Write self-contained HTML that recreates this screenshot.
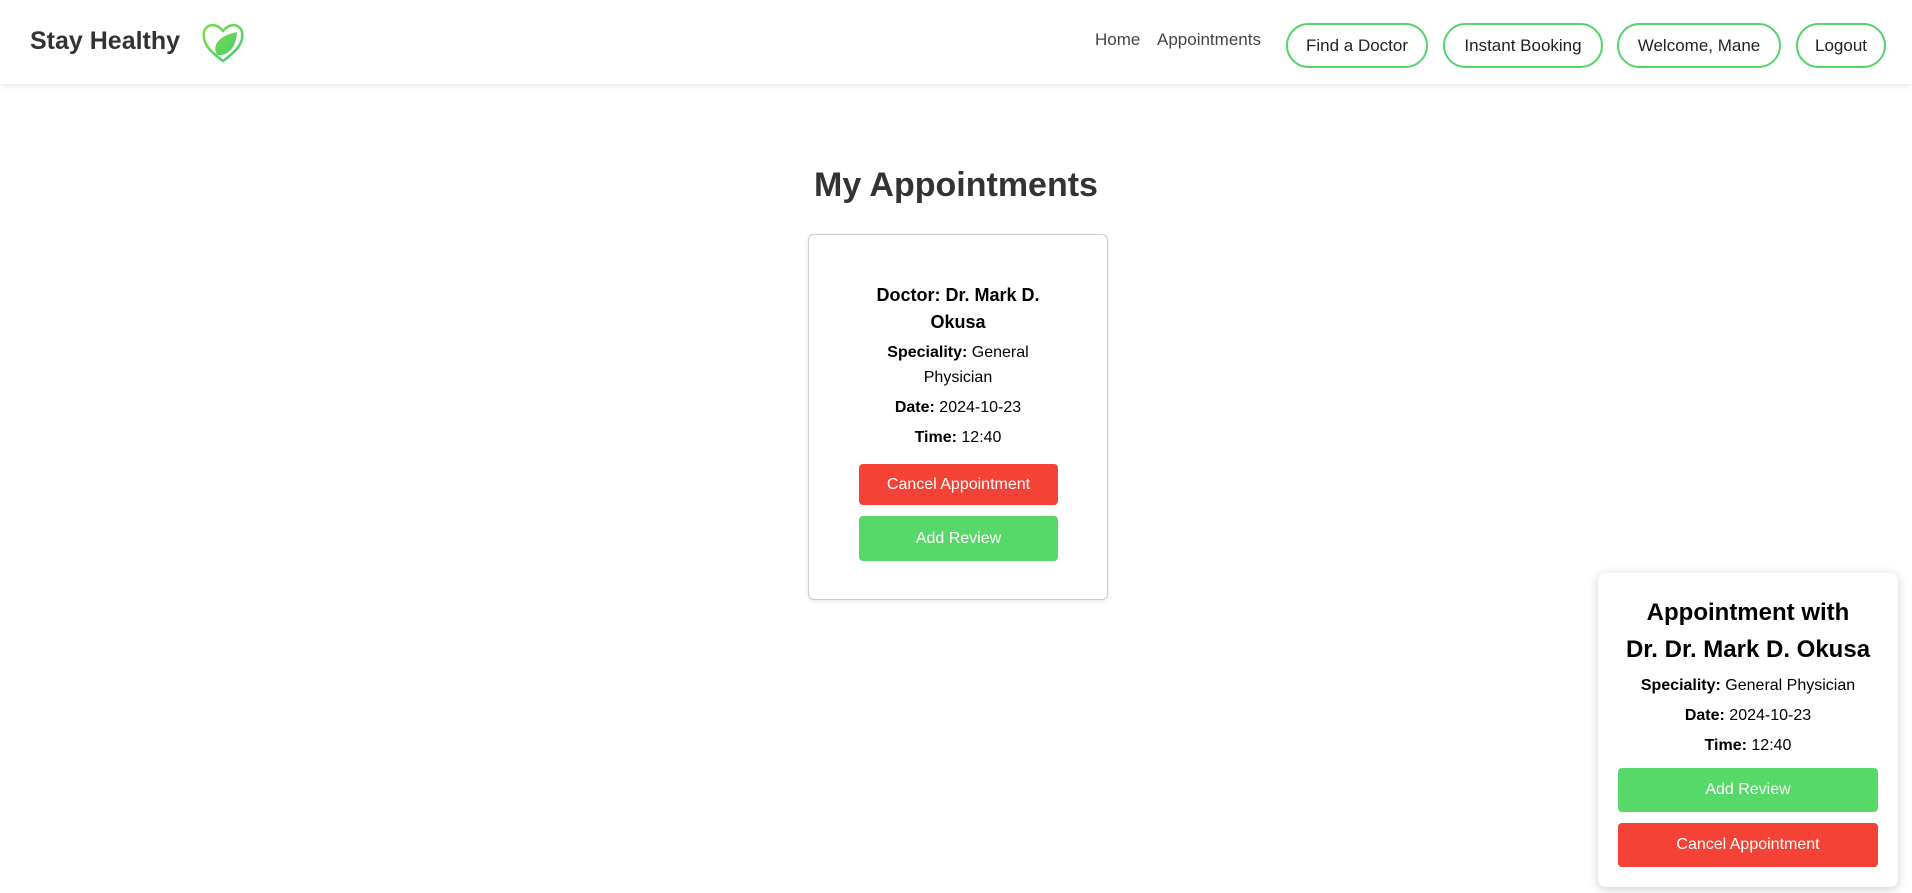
<!DOCTYPE html>
<html><head><meta charset="utf-8"><style>
*{box-sizing:border-box;margin:0;padding:0}
body{width:1912px;height:893px;background:#fff;font-family:"Liberation Sans",sans-serif;color:#333;position:relative;overflow:hidden}
.nav{position:absolute;left:0;top:0;width:1912px;height:84px;background:#fff;box-shadow:0 2px 5px rgba(0,0,0,.1)}
.logo{position:absolute;left:30px;top:27px;font-size:25px;font-weight:bold;color:#333}
.heart{position:absolute;left:200px;top:20px}
.link{position:absolute;top:30px;font-size:17px;color:#444}
.btn{position:absolute;top:23px;height:45px;border:2px solid #55d46a;border-radius:23px;font-size:17px;color:#222;display:flex;align-items:center;justify-content:center}
h1{position:absolute;left:0;width:1912px;top:166px;text-align:center;font-size:34px;color:#333}
.card{position:absolute;left:808px;top:234px;width:300px;height:366px;border:1px solid #ccc;border-radius:6px;box-shadow:0 1px 4px rgba(0,0,0,.1);text-align:center;color:#000}
.t{position:absolute;left:0;width:100%;font-size:16px}
.b{position:absolute;left:50px;width:199px;border-radius:4px;color:#fff;font-size:16px;display:flex;align-items:center;justify-content:center}
.pop{position:absolute;left:1598px;top:573px;width:300px;height:314px;border-radius:8px;box-shadow:0 2px 10px rgba(0,0,0,.2);background:#fff;text-align:center;color:#000}
</style></head><body>
<div class="nav">
<div class="logo">Stay Healthy</div>
<svg class="heart" width="46" height="44" viewBox="0 0 46 44"><defs><linearGradient id="g" x1="0" y1="0" x2="1" y2="1"><stop offset="0" stop-color="#7fdc4a"/><stop offset="1" stop-color="#3fcf6e"/></linearGradient></defs><path d="M23 41 C8 30 2 22 4 12 C6 4 16 2 23 11 C30 2 40 4 42 12 C44 22 38 30 23 41Z" fill="none" stroke="url(#g)" stroke-width="2.5"/><path d="M17 35 C12 25 18 16 37 12 C36 28 28 36 17 35Z" fill="url(#g)"/></svg>
<div class="link" style="left:1095px">Home</div>
<div class="link" style="left:1157px">Appointments</div>
<div class="btn" style="left:1286px;width:142px">Find a Doctor</div>
<div class="btn" style="left:1443px;width:160px">Instant Booking</div>
<div class="btn" style="left:1617px;width:164px">Welcome, Mane</div>
<div class="btn" style="left:1796px;width:90px">Logout</div>
</div>
<h1>My Appointments</h1>
<div class="card">
<div class="t" style="top:47px;font-size:18px;font-weight:bold;line-height:27px">Doctor: Dr. Mark D.<br>Okusa</div>
<div class="t" style="top:105px;line-height:25px"><b>Speciality:</b> General<br>Physician</div>
<div class="t" style="top:164px"><b>Date:</b> 2024-10-23</div>
<div class="t" style="top:194px"><b>Time:</b> 12:40</div>
<div class="b" style="top:229px;height:41px;background:#f44336">Cancel Appointment</div>
<div class="b" style="top:281px;height:45px;background:#57d96a">Add Review</div>
</div>
<div class="pop">
<div class="t" style="top:21px;font-size:24px;font-weight:bold;line-height:37px">Appointment with<br>Dr. Dr. Mark D. Okusa</div>
<div class="t" style="top:104px"><b>Speciality:</b> General Physician</div>
<div class="t" style="top:134px"><b>Date:</b> 2024-10-23</div>
<div class="t" style="top:164px"><b>Time:</b> 12:40</div>
<div class="b" style="left:20px;width:260px;top:195px;height:44px;background:#57d96a">Add Review</div>
<div class="b" style="left:20px;width:260px;top:250px;height:44px;background:#f44336">Cancel Appointment</div>
</div>
</body></html>
